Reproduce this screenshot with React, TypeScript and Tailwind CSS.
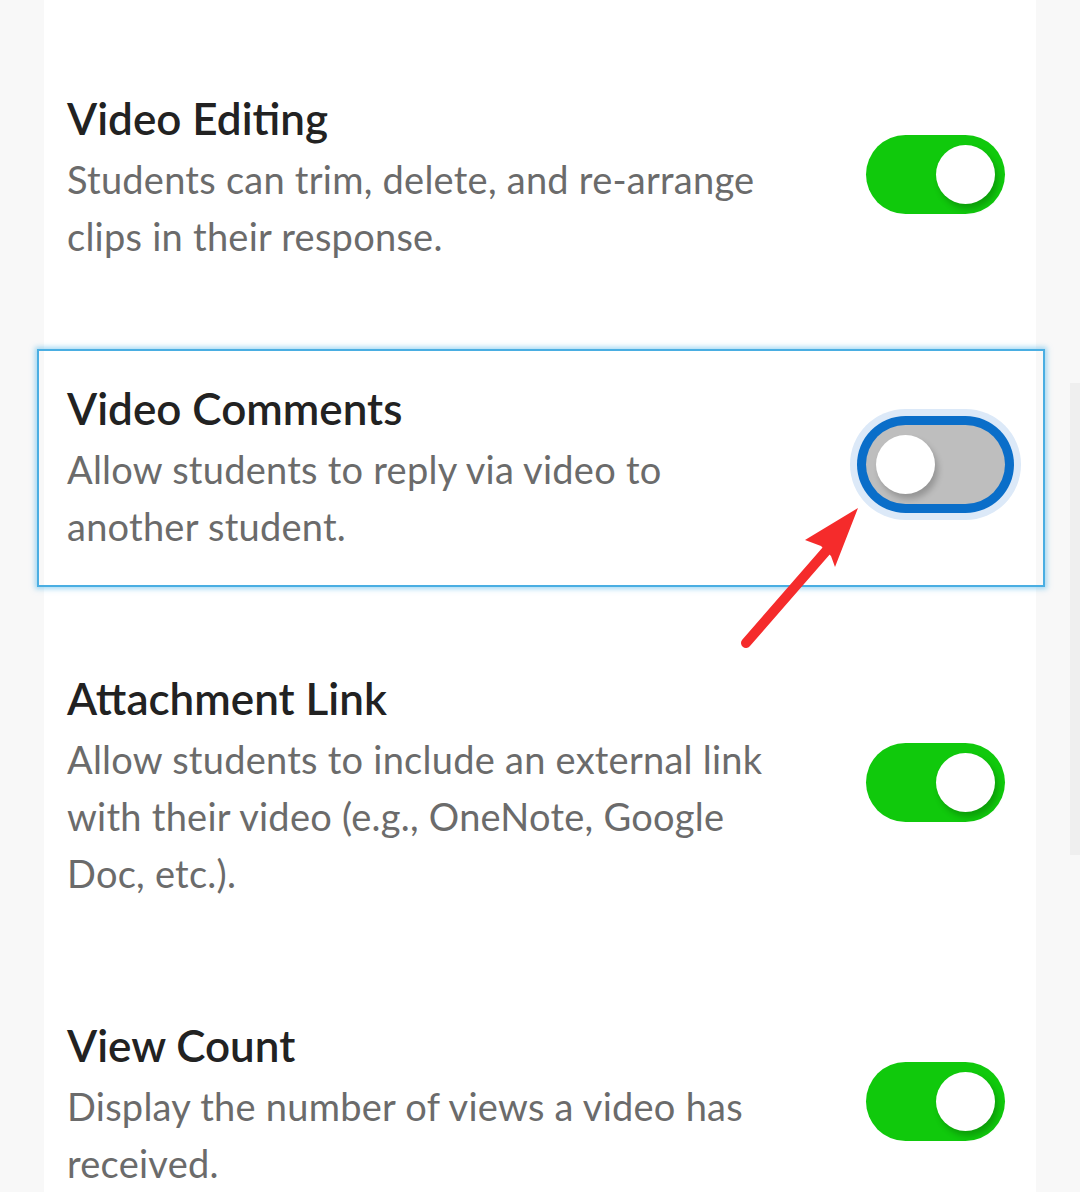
const settings = [
  {
    title: "Video Editing",
    lines: ["Students can trim, delete, and re-arrange", "clips in their response."],
    on: true,
  },
  {
    title: "Video Comments",
    lines: ["Allow students to reply via video to", "another student."],
    on: false,
    focused: true,
  },
  {
    title: "Attachment Link",
    lines: ["Allow students to include an external link", "with their video (e.g., OneNote, Google", "Doc, etc.)."],
    on: true,
  },
  {
    title: "View Count",
    lines: ["Display the number of views a video has", "received."],
    on: true,
  },
];

const Toggle = ({ on, focused }: { on: boolean; focused?: boolean }) => {
  return (
    <div
      className={
        "relative w-[139px] h-[79px] rounded-full shrink-0 mb-[9px] " +
        (on ? "bg-[#10c90c]" : "bg-[#bebebe]") +
        (focused ? " shadow-[0_0_0_9px_#0a6ec9,0_0_0_16px_#dce9f8]" : "")
      }
    >
      <div
        className={
          "absolute top-[10px] w-[59px] h-[59px] rounded-full bg-white shadow-[3px_5px_6px_rgba(0,0,0,0.22)] " +
          (on ? "right-[10px]" : "left-[10px]")
        }
      />
    </div>
  );
};

export default function App() {
  return (
    <div className="relative h-[1192px] overflow-hidden bg-[#f8f8f8] font-['Lato',sans-serif]">
      <div className="absolute right-0 top-[383px] w-[10px] h-[472px] bg-[#efefef]" />
      <div className="ml-[44px] w-[992px] min-h-[1192px] bg-white pt-[59px] flex flex-col gap-[52px]">
        {settings.map((s) => (
          <div
            key={s.title}
            className={
              "-ml-[7px] -mr-[9px] pl-[28px] pr-[38px] pt-[31px] pb-[30px] border-2 flex items-center justify-between " +
              (s.focused
                ? "border-[#4aaee2] shadow-[0_0_5px_2px_rgba(90,185,235,0.55)]"
                : "border-transparent")
            }
          >
            <div>
              <div className="text-[44px] leading-[52px] font-semibold text-[#222222] mb-[7px]">{s.title}</div>
              {s.lines.map((l) => (
                <div key={l} className="text-[38px] leading-[57px] tracking-[0.25px] text-[#6b6b6b] whitespace-nowrap">
                  {l}
                </div>
              ))}
            </div>
            <Toggle on={s.on} focused={s.focused} />
          </div>
        ))}
      </div>
      <svg className="absolute inset-0 pointer-events-none" width="1080" height="1192" viewBox="0 0 1080 1192">
        <line x1="746" y1="643" x2="827" y2="550" stroke="#f52b2b" strokeWidth="10" strokeLinecap="round" />
        <polygon points="858,508 805,540 821,546 831,556 835,567" fill="#f52b2b" />
      </svg>
    </div>
  );
}
